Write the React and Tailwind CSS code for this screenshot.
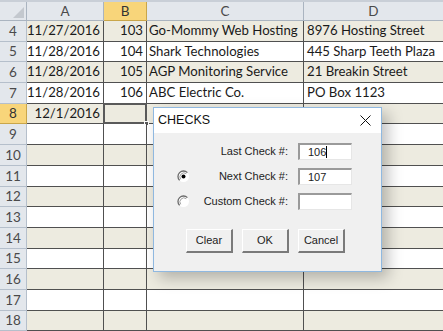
import React from "react";

const rows = [
  [4, "11/27/2016", "103", "Go-Mommy Web Hosting", "8976 Hosting Street"],
  [5, "11/28/2016", "104", "Shark Technologies", "445 Sharp Teeth Plaza"],
  [6, "11/28/2016", "105", "AGP Monitoring Service", "21 Breakin Street"],
  [7, "11/28/2016", "106", "ABC Electric Co.", "PO Box 1123"],
  [8, "12/1/2016", "", "", ""],
  [9, "", "", "", ""],
  [10, "", "", "", ""],
  [11, "", "", "", ""],
  [12, "", "", "", ""],
  [13, "", "", "", ""],
  [14, "", "", "", ""],
  [15, "", "", "", ""],
  [16, "", "", "", ""],
  [17, "", "", "", ""],
  [18, "", "", "", ""],
];

function Radio({ checked }) {
  return (
    <svg width="13" height="13" viewBox="0 0 13 13">
      <circle cx="6.5" cy="6.5" r="5.5" fill="#fff" />
      <path d="M10.4 2.6 A5.5 5.5 0 0 0 2.6 10.4" fill="none" stroke="#6a6a6a" strokeWidth="1.3" />
      <path d="M9.3 3.7 A4 4 0 0 0 3.7 9.3" fill="none" stroke="#a0a0a0" strokeWidth="1" />
      {checked && <circle cx="6.5" cy="6.5" r="2" fill="#000" />}
    </svg>
  );
}

function Input({ value, caret }) {
  return (
    <div className="h-[17px] w-[54px] bg-white border-t-2 border-l-2 border-t-[#9a9a9a] border-l-[#9a9a9a] border-b border-r border-b-[#e6e6e6] border-r-[#e6e6e6] flex items-center pl-[8px] text-[11px] text-[#222] leading-none">
      {value}
      {caret && <span className="inline-block w-px h-[12px] bg-black" />}
    </div>
  );
}

function Button({ children }) {
  return (
    <div className="w-[47px] h-[24px] bg-[#f0f0f0] border-t border-l border-t-white border-l-white border-b-2 border-r-2 border-b-[#7a7a7a] border-r-[#7a7a7a] flex items-center justify-center text-[11px] text-[#222]">
      {children}
    </div>
  );
}

function Label({ children }) {
  return <div className="flex justify-end whitespace-nowrap">{children}</div>;
}

export default function App() {
  return (
    <div className="relative w-[443px] h-[331px] overflow-hidden bg-white" style={{ fontFamily: "Lato, 'Open Sans', sans-serif" }}>
      {/* column header */}
      <div className="flex h-[21px] border-t-2 border-t-[#c9cfd7]">
        <div className="w-[27px] shrink-0 bg-[#e3e7ec] border-r border-b border-[#aab4c0] relative">
          <svg className="absolute right-[2px] bottom-[2px]" width="11" height="11" viewBox="0 0 11 11">
            <path d="M11 0 L11 11 L0 11 Z" fill="#c3c8ce" />
          </svg>
        </div>
        <div className="w-[77px] shrink-0 bg-[#e3e7ec] border-r border-b border-[#aab4c0] flex items-center justify-center text-[13.5px] text-[#4a4a4a]">A</div>
        <div className="w-[43px] shrink-0 bg-[#f8d57a] border-r border-b border-[#c9a64a] flex items-center justify-center text-[13.5px] text-[#333]">B</div>
        <div className="w-[157px] shrink-0 bg-[#e3e7ec] border-r border-b border-[#aab4c0] flex items-center justify-center text-[13.5px] text-[#4a4a4a]">C</div>
        <div className="flex-1 bg-[#e3e7ec] border-b border-[#aab4c0] flex items-center justify-center text-[13.5px] text-[#4a4a4a]">D</div>
      </div>

      {rows.map(([n, a, b, c, d]) => {
        const beige = n % 2 === 0;
        const bg = beige ? "bg-[#edebe0]" : "bg-white";
        const sel = n === 8;
        return (
          <div key={n} className="flex h-[20.7px] text-[13.2px] text-[#1a1a1a]">
            <div className={`w-[27px] shrink-0 border-r border-b flex items-center justify-center text-[13.5px] ${sel ? "bg-[#f8d57a] border-[#c9a64a] text-[#333]" : "bg-[#e3e7ec] border-[#b5bfcb] text-[#4a4a4a]"}`}>{n}</div>
            <div className={`w-[77px] shrink-0 border-r border-b border-[#505050] ${bg} flex items-center justify-end pr-[3px]`}>{a}</div>
            <div className={`w-[43px] shrink-0 border-r border-b border-[#505050] ${bg} flex items-center justify-end pr-[3px] relative`}>
              {b}
              {sel && (
                <>
                  <div className="absolute -left-px -top-px -right-px -bottom-px border-2 border-[#5a5a5a]" />
                  <div className="absolute -right-[3px] -bottom-[3px] w-[5px] h-[5px] bg-[#5a5a5a] border border-white" />
                </>
              )}
            </div>
            <div className={`w-[157px] shrink-0 border-r border-b border-[#505050] ${bg} flex items-center pl-[2px] whitespace-nowrap`}>{c}</div>
            <div className={`flex-1 border-b border-[#505050] ${bg} flex items-center pl-[3px] whitespace-nowrap`}>{d}</div>
          </div>
        );
      })}

      {/* dialog */}
      <div
        className="absolute left-[153px] top-[107px] w-[229px] h-[165px] bg-[#f0f0f0] border border-[#8fb8e0] flex flex-col shadow-[6px_6px_14px_rgba(0,0,0,0.25)]"
        style={{ fontFamily: "'Liberation Sans', Arial, sans-serif" }}
      >
        <div className="h-[25px] bg-white flex items-center justify-between pl-[4px] pr-[10px] shrink-0">
          <span className="text-[12.5px] text-[#111]">CHECKS</span>
          <svg width="11" height="11" viewBox="0 0 11 11">
            <path d="M0.5 0.5 L10.5 10.5 M10.5 0.5 L0.5 10.5" stroke="#111" strokeWidth="1" />
          </svg>
        </div>
        <div className="pt-[10px] flex flex-col">
          <div className="grid grid-cols-[59px_65px_54px] gap-x-[10px] gap-y-[8px] items-center text-[11px] text-[#222]">
            <div />
            <Label>Last Check #:</Label>
            <Input value="106" caret />
            <div className="flex justify-center"><Radio checked /></div>
            <Label>Next Check #:</Label>
            <Input value="107" />
            <div className="flex justify-center"><Radio /></div>
            <Label>Custom Check #:</Label>
            <Input value="" />
          </div>
          <div className="flex gap-[9px] pl-[32px] mt-[19px]">
            <Button>Clear</Button>
            <Button>OK</Button>
            <Button>Cancel</Button>
          </div>
        </div>
      </div>
    </div>
  );
}
